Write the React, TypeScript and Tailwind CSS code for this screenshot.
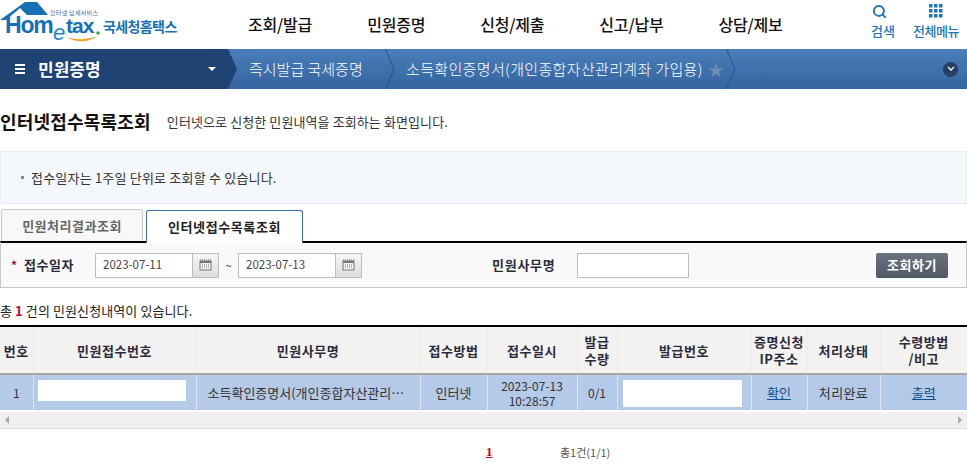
import { Search } from "lucide-react";

const font = { fontFamily: '"Noto Sans CJK KR", "Liberation Sans", sans-serif' };

function Logo() {
  return (
    <svg width="182" height="46" viewBox="0 0 182 46" className="shrink-0">
      <path d="M0 20 L25 2 L37 2 L48 15 L27 15 L20 8 L6 20 Z" fill="#1670b5" />
      <text x="50" y="15" fontSize="6" fill="#2b6cb0" fontFamily="Noto Sans CJK KR, sans-serif" letterSpacing="0.3">인터넷 납세서비스</text>
      <text x="5" y="33" fontSize="23" fontWeight="700" fill="#1670b5" letterSpacing="-1.2" fontFamily="Liberation Sans, sans-serif">Hom</text>
      <text x="53" y="40" fontSize="22" fontStyle="italic" fill="#1c8ac8" fontFamily="Liberation Sans, sans-serif">e</text>
      <text x="66" y="33" fontSize="21" fontWeight="700" fill="#1670b5" letterSpacing="-1" fontFamily="Liberation Sans, sans-serif">tax</text>
      <circle cx="98" cy="33" r="1.8" fill="#3ca03c" />
      <path d="M66 37 Q82 46 98 36 Q82 42 66 37 Z" fill="#f0a030" />
      <text x="103" y="32" fontSize="14" fontWeight="700" fill="#1670b5" letterSpacing="-0.6" fontFamily="Noto Sans CJK KR, sans-serif">국세청홈택스</text>
    </svg>
  );
}

function Chevron({ color = "#24558f" }: { color?: string }) {
  return (
    <svg width="10" height="40" viewBox="0 0 10 40" className="shrink-0">
      <path d="M0.5 0 L9 20 L0.5 40" fill="none" stroke={color} strokeWidth="1" />
    </svg>
  );
}

function CalendarBtn() {
  return (
    <button className="flex h-[25px] w-[26px] items-center justify-center border border-l-0 border-[#bdbdbd] bg-gradient-to-b from-[#f6f6f6] to-[#dedede]">
      <svg width="13" height="12" viewBox="0 0 13 12">
        <path d="M1 1h11" stroke="#666" strokeDasharray="1 1" />
        <rect x="1" y="2" width="11" height="9" fill="#f2f2f2" stroke="#777" />
        <rect x="1" y="2" width="11" height="2" fill="#777" />
        <path d="M3 6h7M3 8h7" stroke="#777" strokeDasharray="1 1" />
      </svg>
    </button>
  );
}

function DateField({ value }: { value: string }) {
  return (
    <div className="flex">
      <div className="flex h-[25px] w-[98px] items-center border border-[#bdbdbd] bg-white pl-[7px] text-[11.5px] text-[#444]">{value}</div>
      <CalendarBtn />
    </div>
  );
}

const nav = ["조회/발급", "민원증명", "신청/제출", "신고/납부", "상담/제보"];
const th = "border-r border-[#ebebe9] px-0 text-center font-bold text-[#2b2b3d] text-[13px] leading-[17px] tracking-[0.5px]";
const cell = "border-r border-[#dfe6f2] text-center leading-[15px] text-[#333]";
const td = `${cell} text-[13px]`;
const tdSmall = `${cell} text-[12px]`;

export default function App() {
  return (
    <div style={font} className="h-[475px] w-[967px] overflow-hidden bg-white text-[13px] text-[#222]">
      <header className="flex h-[49px] items-center">
        <div className="w-[248px] self-start"><Logo /></div>
        <nav className="flex w-[560px] items-center gap-[55px] pb-[1px]">
          {nav.map((n) => (
            <span key={n} className="whitespace-nowrap text-[16px] font-medium tracking-[-0.2px] text-[#111]">{n}</span>
          ))}
        </nav>
        <div className="flex flex-1 justify-end gap-[17px] self-start pr-[7px] pt-[4px] text-[#1b74b8]">
          <div className="flex w-[24px] flex-col items-center gap-[4px] text-[13px] font-medium leading-[16px]">
            <Search size={15} strokeWidth={3.2} className="mr-[8px]" />
            <span className="whitespace-nowrap">검색</span>
          </div>
          <div className="flex w-[48px] flex-col items-center gap-[5px] text-[13px] font-medium leading-[16px]">
            <svg width="14" height="14" viewBox="0 0 14 14" fill="#1b74b8">
              {[0, 5, 10].flatMap((y) => [0, 5, 10].map((x) => <rect key={`${x}-${y}`} x={x} y={y} width="3.5" height="3.5" />))}
            </svg>
            <span className="whitespace-nowrap tracking-[-0.5px]">전체메뉴</span>
          </div>
        </div>
      </header>

      <div className="flex h-[40px] items-center bg-gradient-to-b from-[#4a7fba] to-[#35649f] text-white">
        <div className="flex h-full w-[228px] items-center bg-[#1f4474] pl-[15px] pr-[12px]">
          <svg width="10" height="10" viewBox="0 0 10 10" fill="white"><rect y="0" width="10" height="2" /><rect y="4" width="10" height="2" /><rect y="8" width="10" height="2" /></svg>
          <span className="ml-[13px] flex-1 text-[17px] font-bold">민원증명</span>
          <span className="h-0 w-0 border-x-[4px] border-t-[4px] border-x-transparent border-t-white" />
        </div>
        <svg width="10" height="40" viewBox="0 0 10 40" className="shrink-0"><path d="M0 0 L9 20 L0 40 Z" fill="#1f4474" /></svg>
        <span className="ml-[11px] w-[136px] whitespace-nowrap text-[15px] font-light">즉시발급 국세증명</span>
        <Chevron />
        <span className="ml-[11px] flex w-[320px] items-center whitespace-nowrap text-[15px] font-light tracking-[0.35px]">소득확인증명서(개인종합자산관리계좌 가입용)<span className="ml-[5px] text-[16px] leading-none text-[#6f8cb4]">★</span></span>
        <Chevron />
        <div className="ml-auto mr-[9px] flex h-[15px] w-[15px] items-center justify-center rounded-full bg-[#263f63]">
          <svg width="8" height="6" viewBox="0 0 8 6"><path d="M1 1 L4 4 L7 1" fill="none" stroke="white" strokeWidth="1.3" /></svg>
        </div>
      </div>

      <div className="flex h-[62px] items-end pb-[19px]">
        <h1 className="text-[18px] font-bold leading-[22px] tracking-[0.2px] text-[#111]">인터넷접수목록조회</h1>
        <p className="ml-[16px] text-[13px] leading-[20px] tracking-[0.1px] text-[#333]">인터넷으로 신청한 민원내역을 조회하는 화면입니다.</p>
      </div>

      <div className="flex h-[53px] items-center border border-[#e8edf5] bg-[#f4f7fc] pl-[20px]">
        <span className="mr-[7px] h-[3px] w-[3px] bg-[#888]" />
        <span className="text-[13px] tracking-[0.2px] text-[#333]">접수일자는 1주일 단위로 조회할 수 있습니다.</span>
      </div>

      <div className="mt-[4px] flex h-[33px] items-end pl-[1px]">
        <div className="flex h-[32px] w-[142px] items-center justify-center rounded-t-[3px] border border-b-0 border-[#c8c8c8] bg-[#f8f8f8] text-[13px] font-bold tracking-[0.5px] text-[#666]">민원처리결과조회</div>
        <div className="relative z-10 ml-[3px] -mb-[2px] flex h-[33px] w-[157px] items-center justify-center rounded-t-[3px] border border-b-0 border-[#3d6ea5] bg-white text-[13px] font-bold tracking-[0.6px] text-[#222]">인터넷접수목록조회</div>
      </div>

      <div className="flex h-[47px] items-center border-x border-b border-t-2 border-x-[#c8c8c8] border-b-[#c4c4c4] border-t-black bg-[#f9f9f9] pl-[10px] pr-[18px]">
        <span className="mr-[7px] text-[12px] font-bold leading-none text-[#a5122a]">*</span>
        <span className="w-[71px] text-[13px] font-bold tracking-[0.5px] text-[#2b2b3d]">접수일자</span>
        <DateField value="2023-07-11" />
        <span className="w-[19px] text-center text-[11px] text-[#333]">~</span>
        <DateField value="2023-07-13" />
        <span className="ml-[130px] w-[85px] text-[13px] font-bold tracking-[0.7px] text-[#2b2b3d]">민원사무명</span>
        <div className="h-[25px] w-[112px] border border-[#bdbdbd] bg-white" />
        <button className="ml-auto flex h-[25px] w-[72px] items-center justify-center rounded-[2px] bg-gradient-to-b from-[#6a7280] to-[#505866] text-[13px] font-bold tracking-[0.5px] text-white">조회하기</button>
      </div>

      <p className="mt-[14px] h-[23px] text-[13px] leading-[18px] tracking-[0.1px] text-[#222]">
        총 <b className="text-[#c4003a]">1</b> 건의 민원신청내역이 있습니다.
      </p>

      <table className="w-[967px] table-fixed border-collapse border-t-2 border-black">
        <colgroup>
          {[33, 163, 224, 67, 90, 40, 134, 56, 73, 87].map((w, i) => <col key={i} style={{ width: w }} />)}
        </colgroup>
        <thead>
          <tr className="h-[48px] border-b-2 border-[#a9a6a4] bg-[#f3f2f0]">
            <th className={th}>번호</th>
            <th className={th}>민원접수번호</th>
            <th className={th}>민원사무명</th>
            <th className={th}>접수방법</th>
            <th className={th}>접수일시</th>
            <th className={th}>발급<br />수량</th>
            <th className={th}>발급번호</th>
            <th className={th}>증명신청<br />IP주소</th>
            <th className={th}>처리상태</th>
            <th className={`${th} border-r-0`}>수령방법<br />/비고</th>
          </tr>
        </thead>
        <tbody>
          <tr className="h-[36px] bg-[#b5c9e8]">
            <td className={tdSmall}>1</td>
            <td className={td}><div className="-mt-[4px] ml-[4px] h-[21px] w-[148px] bg-white" /></td>
            <td className={`${td} whitespace-nowrap pl-[11px] text-left`}>소득확인증명서(개인종합자산관리…</td>
            <td className={td}>인터넷</td>
            <td className={tdSmall}>2023-07-13<br />10:28:57</td>
            <td className={tdSmall}>0/1</td>
            <td className={td}><div className="ml-[5px] mt-[1px] h-[27px] w-[119px] bg-white" /></td>
            <td className={td}><a className="text-[#0b4f92] underline">확인</a></td>
            <td className={`${td} tracking-[0.4px]`}>처리완료</td>
            <td className={`${td} border-r-0`}><a className="text-[#0b4f92] underline">출력</a></td>
          </tr>
        </tbody>
      </table>

      <div className="flex h-[19px] items-center justify-between border-b border-t-2 border-b-[#dddddd] border-t-white bg-[#f0f0f0] px-[5px]">
        <span className="h-0 w-0 border-y-[4px] border-r-[4px] border-y-transparent border-r-[#a9a9a9]" />
        <span className="h-0 w-0 border-y-[4px] border-l-[4px] border-y-transparent border-l-[#a9a9a9]" />
      </div>

      <div className="mt-[13px] flex h-[20px] items-center pl-[486px]">
        <a className="w-[74px] text-[13px] font-bold text-[#c40018] underline" style={{ fontFamily: '"Liberation Serif", serif' }}>1</a>
        <span className="text-[11px] text-[#555]">총1건(1/1)</span>
      </div>
    </div>
  );
}
